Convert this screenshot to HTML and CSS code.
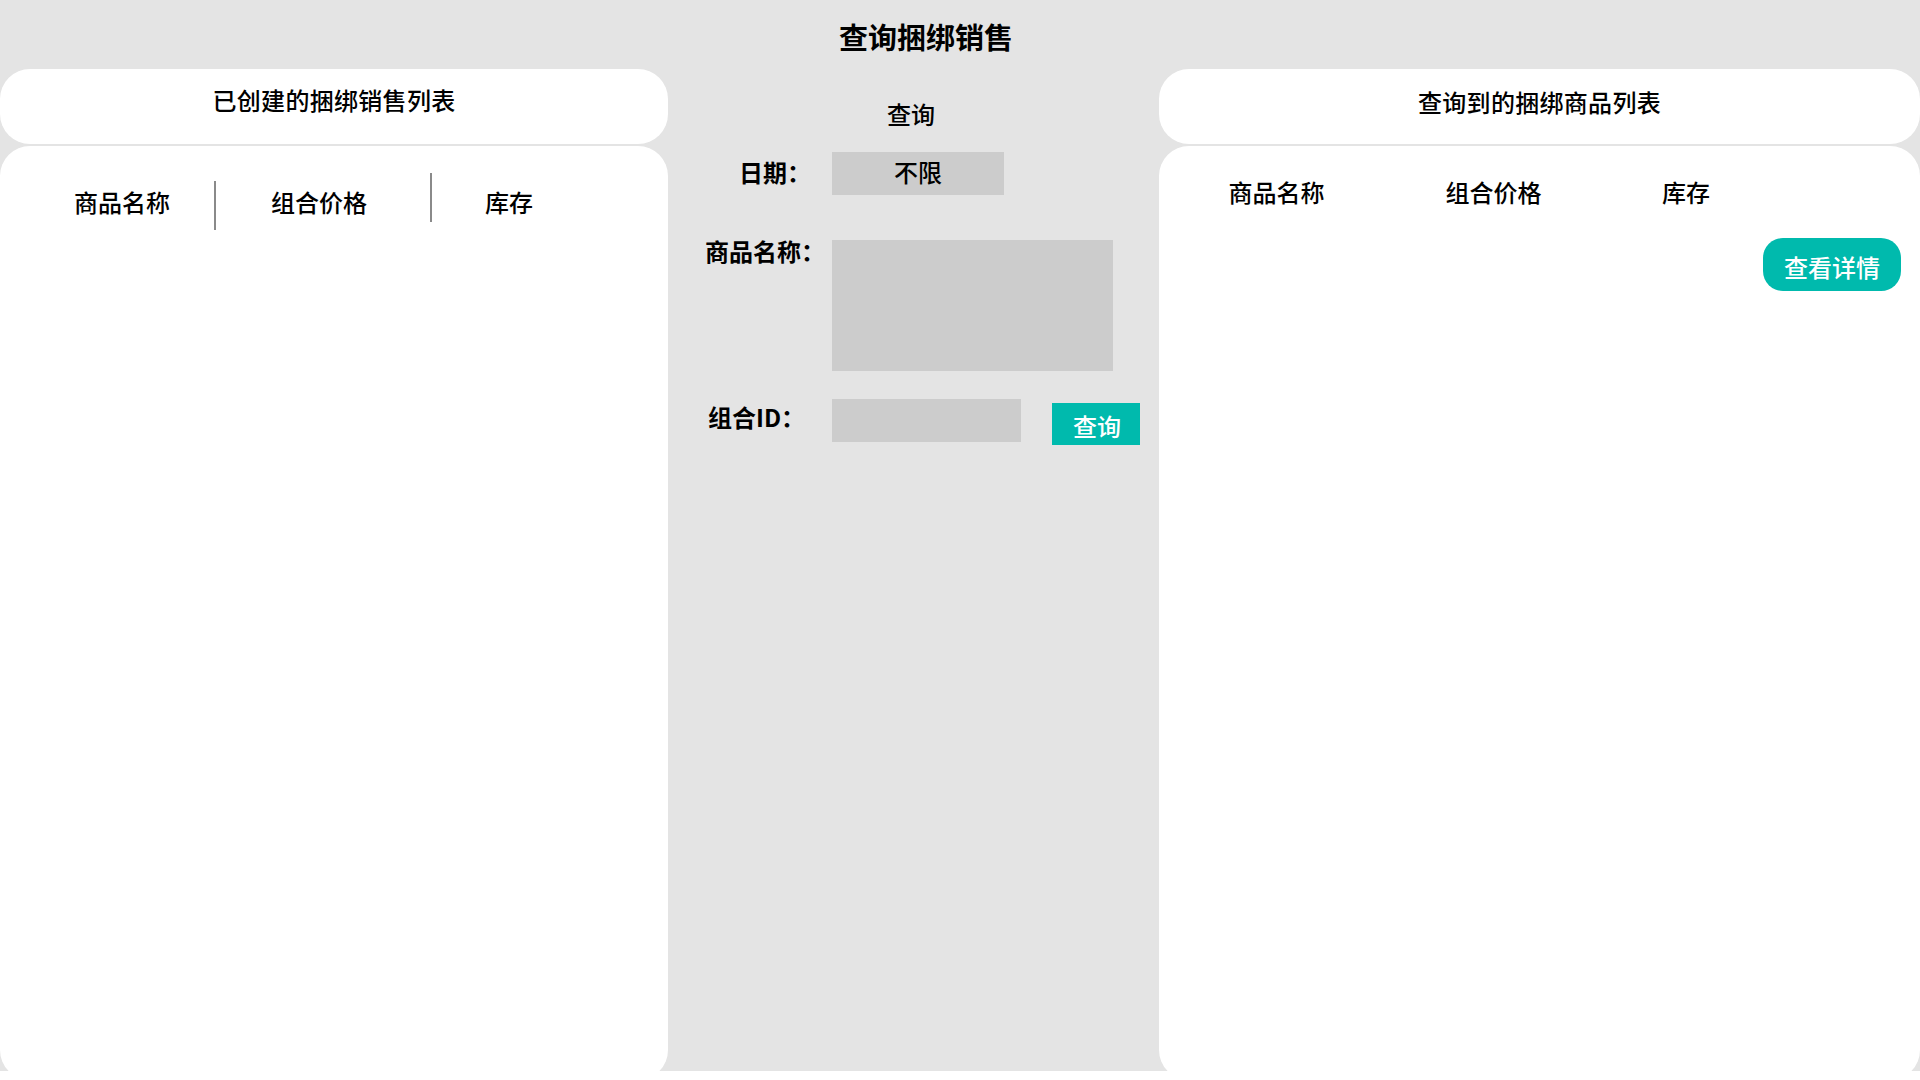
FILE: index.html
```html
<!DOCTYPE html>
<html lang="zh-CN">
<head>
<meta charset="utf-8">
<title>查询捆绑销售</title>
<link rel="stylesheet" href="styles.css">
</head>
<body>
<div class="page">
  <header class="page-title">查询捆绑销售</header>
  <div class="columns">
    <section class="col col-left">
      <div class="card card-head card-head-left">已创建的捆绑销售列表</div>
      <div class="card card-body">
        <div class="thead thead-left">
          <div class="th th-l1">商品名称</div>
          <div class="sep sep-1"></div>
          <div class="th th-l2">组合价格</div>
          <div class="sep sep-2"></div>
          <div class="th th-l3">库存</div>
        </div>
      </div>
    </section>

    <section class="col col-mid">
      <div class="mid-title">查询</div>
      <div class="form-row row-date">
        <div class="label label-date">日期：</div>
        <div class="field field-date">不限</div>
      </div>
      <div class="form-row row-name">
        <div class="label label-name">商品名称：</div>
        <div class="field field-name"></div>
      </div>
      <div class="form-row row-id">
        <div class="label label-id">组合ID：</div>
        <div class="field field-id"></div>
        <button class="btn-query">查询</button>
      </div>
    </section>

    <section class="col col-right">
      <div class="card card-head card-head-right">查询到的捆绑商品列表</div>
      <div class="card card-body card-body-right">
        <div class="thead thead-right">
          <div class="th th-r1">商品名称</div>
          <div class="th th-r2">组合价格</div>
          <div class="th th-r3">库存</div>
        </div>
        <button class="btn-detail">查看详情</button>
      </div>
    </section>
  </div>
</div>
</body>
</html>
```

FILE: styles.css
```css
* {
  box-sizing: border-box;
}

html, body {
  margin: 0;
  padding: 0;
  background: #ffffff;
}

body {
  font-family: "Noto Sans CJK SC", "Noto Sans", sans-serif;
  color: #000;
}

.page {
  width: 1920px;
  height: 1071px;
  background: #e4e4e4;
  overflow: hidden;
  display: flex;
  flex-direction: column;
}

.page-title {
  height: 69px;
  flex: none;
  display: flex;
  align-items: center;
  justify-content: center;
  padding-right: 68px;
  padding-top: 4px;
  font-size: 29px;
  font-weight: 700;
  line-height: 1;
}

.columns {
  flex: none;
  height: 1011px;
  display: flex;
}

.col {
  display: flex;
  flex-direction: column;
}

.col-left {
  width: 668px;
}

.col-mid {
  width: 491px;
}

.col-right {
  width: 761px;
}

.card {
  background: #ffffff;
  border-radius: 30px;
}

.card-head {
  height: 75px;
  flex: none;
  margin-bottom: 2px;
  display: flex;
  align-items: center;
  justify-content: center;
  font-size: 24px;
  font-weight: 500;
  line-height: 1;
  letter-spacing: 0.3px;
}

.card-head-left {
  padding-bottom: 13px;
}

.card-head-right {
  padding-bottom: 9px;
}

.card-body {
  flex: 1;
  display: flex;
  flex-direction: column;
}

.thead {
  display: flex;
  align-items: center;
  height: 50px;
  font-size: 24px;
  font-weight: 500;
  line-height: 1;
}

.thead-left {
  margin-top: 31px;
}

.th {
  text-align: center;
  white-space: nowrap;
}

.th-l1 {
  width: 214px;
  padding-left: 30px;
}

.th-l2 {
  width: 214px;
  padding-right: 8px;
}

.th-l3 {
  width: 156px;
  padding-right: 2px;
}

.sep {
  width: 2px;
  height: 49px;
  background: #8a8a8a;
  align-self: flex-start;
}

.sep-1 {
  margin-top: 4px;
}

.sep-2 {
  margin-top: -4px;
}

.thead-right {
  margin-top: 21px;
  padding-left: 20px;
}

.th-r1 {
  width: 195px;
}

.th-r2 {
  width: 239px;
}

.th-r3 {
  width: 146px;
}

.btn-detail {
  align-self: flex-end;
  margin-top: 21px;
  margin-right: 19px;
  width: 138px;
  height: 53px;
  border: none;
  border-radius: 20px;
  background: #00baad;
  color: #ffffff;
  font-family: inherit;
  font-size: 24px;
  font-weight: 500;
  line-height: 1;
  padding: 4px 0 0;
}

.mid-title {
  margin-top: 30px;
  height: 30px;
  line-height: 30px;
  text-align: center;
  padding-right: 5px;
  font-size: 24px;
  font-weight: 500;
}

.form-row {
  display: flex;
}

.row-date {
  margin-top: 23px;
  align-items: center;
}

.row-name {
  margin-top: 45px;
  align-items: flex-start;
}

.row-id {
  margin-top: 28px;
  align-items: flex-start;
}

.label {
  width: 164px;
  flex: none;
  font-size: 24px;
  font-weight: 700;
  line-height: 30px;
  white-space: nowrap;
}

.label-date {
  padding-left: 71px;
  padding-bottom: 4px;
}

.label-name {
  padding-left: 37px;
  margin-top: -4px;
}

.label-id {
  padding-left: 40px;
  margin-top: 3px;
}

.field {
  background: #cccccc;
  flex: none;
}

.field-date {
  width: 172px;
  height: 43px;
  display: flex;
  align-items: center;
  justify-content: center;
  padding-bottom: 4px;
  font-size: 24px;
  font-weight: 500;
  line-height: 1;
}

.field-name {
  width: 281px;
  height: 131px;
}

.field-id {
  width: 189px;
  height: 43px;
}

.btn-query {
  margin-left: 31px;
  margin-top: 4px;
  width: 88px;
  height: 42px;
  border: none;
  border-radius: 0;
  background: #00baad;
  color: #ffffff;
  font-family: inherit;
  font-size: 24px;
  font-weight: 500;
  line-height: 1;
  padding: 3px 0 0 2px;
}
```
